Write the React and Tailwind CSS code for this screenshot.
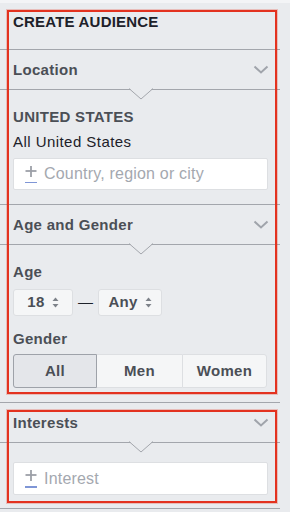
import React from 'react'

const LINE = '#a3a6ac'

function Chevron() {
  return (
    <svg width="16" height="9" viewBox="0 0 16 9" className="mr-[11px]">
      <polyline points="1.5,1.5 8,7.5 14.5,1.5" fill="none" stroke="#a0a4ab" strokeWidth="2" />
    </svg>
  )
}

function Notch() {
  return (
    <svg width="24" height="12" viewBox="0 0 24 12" className="absolute left-[129px] bottom-[-11px]">
      <polygon points="0,0 24,0 12,11.5" fill="#e9ebee" />
      <polyline points="0,0.5 12,11 24,0.5" fill="none" stroke={LINE} strokeWidth="1" />
    </svg>
  )
}

function SectionRow({ title }) {
  return (
    <div className="relative h-[40px] flex items-center justify-between pl-[13px] border-b border-[#a3a6ac]">
      <span className="text-[15px] leading-[18px] font-bold tracking-[0.3px] text-[#4b4f56]">{title}</span>
      <Chevron />
      <Notch />
    </div>
  )
}

function AddInput({ placeholder, height }) {
  return (
    <div className={`flex items-center ${height} bg-white border border-[#dddfe2] rounded-[2px]`}>
      <span className="ml-[11px] w-[12px] flex flex-col items-center pt-[1px]">
        <svg width="12" height="11" viewBox="0 0 12 11">
          <line x1="6" y1="0" x2="6" y2="11" stroke="#9ca0a7" strokeWidth="1.8" />
          <line x1="0.5" y1="5" x2="11.5" y2="5" stroke="#9ca0a7" strokeWidth="1.8" />
        </svg>
        <span className="mt-[5px] block w-[12px] h-[1.5px] bg-[#7f96d6]" />
      </span>
      <span className="ml-[7px] text-[16px] leading-[18px] tracking-[0.2px] text-[#a4a8af]">{placeholder}</span>
    </div>
  )
}

function SelectArrows() {
  return (
    <svg width="7" height="11" viewBox="0 0 7 11">
      <polygon points="3.5,0.5 6.5,4 0.5,4" fill="#7d8289" />
      <polygon points="0.5,7 6.5,7 3.5,10.5" fill="#7d8289" />
    </svg>
  )
}

function Select({ value, width }) {
  return (
    <div className={`${width} h-[27px] flex items-center justify-center gap-[7px] bg-[#f5f6f7] border border-[#dddfe2] rounded-[3px]`}>
      <span className="text-[15px] font-bold tracking-[0.3px] text-[#4b4f56]">{value}</span>
      <SelectArrows />
    </div>
  )
}

export default function App() {
  return (
    <div className="w-[290px] h-[512px] overflow-hidden bg-[#e9ebee] text-[#1d2129]" style={{ fontFamily: '"Liberation Sans", Arial, sans-serif' }}>
      <div className="h-[3px] bg-[#f3f4f6]" />
      <div className="w-[280px]">
        {/* first group */}
        <div className="relative">
          <div className="h-[47px] pl-[13px] pt-[10px] border-b border-[#a3a6ac]">
            <span className="block text-[15px] leading-[18px] font-bold tracking-[0.2px]">CREATE AUDIENCE</span>
          </div>

          <SectionRow title="Location" />
          <div className="pl-[13px] pr-[12px] pt-[18px] pb-[14px] border-b border-[#a3a6ac]">
            <div className="text-[15px] leading-[18px] font-bold tracking-[0.3px] text-[#4b4f56]">UNITED STATES</div>
            <div className="mt-[7px] text-[15px] leading-[18px] tracking-[0.45px]">All United States</div>
            <div className="mt-[7px]">
              <AddInput placeholder="Country, region or city" height="h-[32px]" />
            </div>
          </div>

          <SectionRow title="Age and Gender" />
          <div className="pl-[13px] pr-[13px] pt-[18px] pb-[14px] border-b border-[#a3a6ac]">
            <div className="text-[15px] leading-[18px] font-bold tracking-[0.3px] text-[#4b4f56]">Age</div>
            <div className="mt-[8px] flex items-center gap-[5px]">
              <Select value="18" width="w-[60px]" />
              <span className="text-[15px] text-[#1d2129]">—</span>
              <Select value="Any" width="w-[64px]" />
            </div>
            <div className="mt-[14px] text-[15px] leading-[18px] font-bold tracking-[0.3px] text-[#4b4f56]">Gender</div>
            <div className="mt-[6px] flex h-[34px] text-[15px] font-bold tracking-[0.3px] text-[#4b4f56]">
              <div className="w-[84px] flex items-center justify-center bg-[#e4e6ea] border border-[#9ea2a9] rounded-l-[3px]">All</div>
              <div className="w-[85px] flex items-center justify-center bg-[#f5f6f7] border-y border-[#dddfe2]">Men</div>
              <div className="w-[85px] flex items-center justify-center bg-[#f5f6f7] border border-[#dddfe2] rounded-r-[3px]">Women</div>
            </div>
          </div>

          <div className="pointer-events-none absolute top-[7px] left-[7px] w-[270px] bottom-[9px] border-[2.5px] border-[#e3321f] shadow-[0_0_0_1px_rgba(227,50,31,0.25)]" />
        </div>

        {/* second group */}
        <div className="relative">
          <SectionRow title="Interests" />
          <div className="pl-[13px] pr-[12px] pt-[19px] pb-[13px] border-b border-[#a3a6ac]">
            <AddInput placeholder="Interest" height="h-[33px]" />
          </div>
          <div className="pointer-events-none absolute top-[7px] left-[7px] w-[270px] bottom-[6px] border-[2.5px] border-[#e3321f] shadow-[0_0_0_1px_rgba(227,50,31,0.25)]" />
        </div>
      </div>
    </div>
  )
}
